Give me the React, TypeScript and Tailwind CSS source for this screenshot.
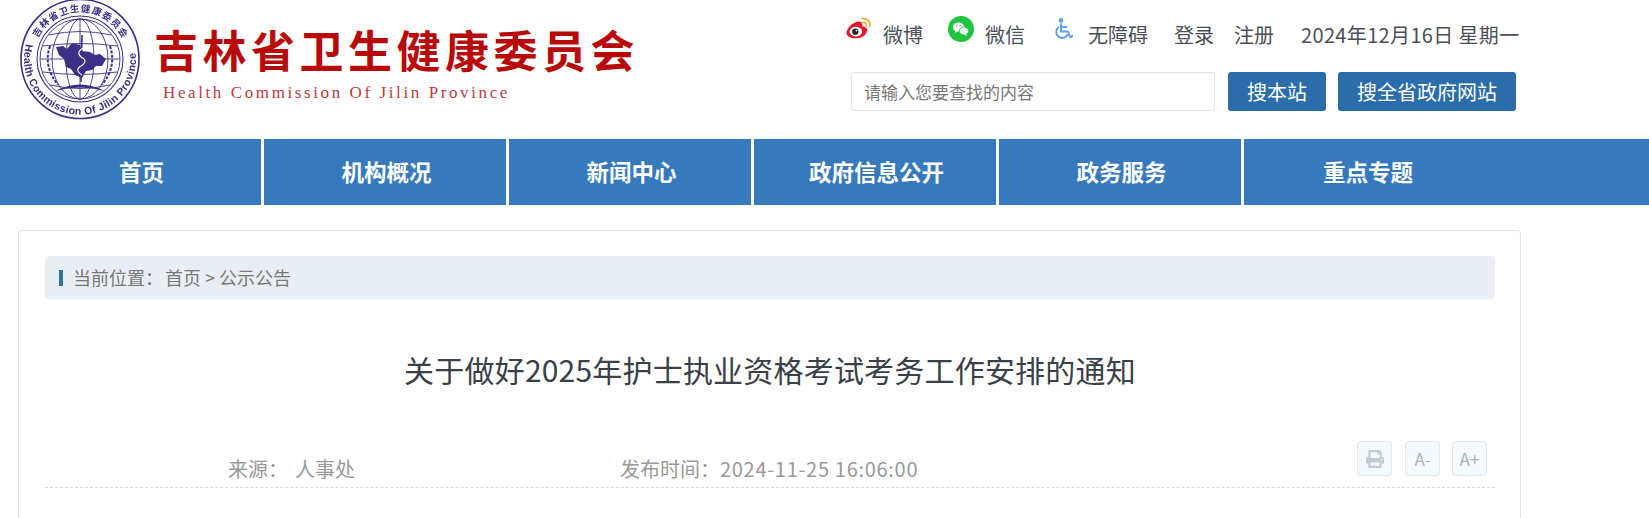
import { FaPrint } from "react-icons/fa";

const navItems = ["首页", "机构概况", "新闻中心", "政府信息公开", "政务服务", "重点专题"];

const sideBtn =
  "flex h-[35px] w-[35px] items-center justify-center rounded-[4px] border border-[#dfe7ec] bg-[#f4fafe] text-[17px] text-[#a9b2b8]";
const searchBtn =
  "h-[39px] rounded-[3px] bg-[#2b6dab] text-[20px] text-white";

function Seal() {
  const ink = "#3b3087";
  return (
    <svg width="122" height="120" viewBox="0 0 122 120" className="blur-[0.3px]">
      <defs>
        <path id="sealTop" d="M 19 38 A 47 47 0 0 1 104 40" />
        <path id="sealBottom" d="M 7 44 A 56 56 0 1 0 116.5 51" />
      </defs>
      <ellipse cx="61" cy="59" rx="59" ry="59.5" fill="none" stroke={ink} strokeWidth="1.6" />
      <circle cx="61" cy="59" r="43" fill="none" stroke={ink} strokeWidth="1.1" />
      <circle cx="61" cy="59" r="40" fill="none" stroke={ink} strokeWidth="0.9" />
      <text fill={ink} fontSize="9.5" fontWeight="700" fontFamily="'Noto Sans CJK SC', sans-serif">
        <textPath href="#sealTop" textLength="104">吉林省卫生健康委员会</textPath>
      </text>
      <text fill={ink} fontSize="10.5" fontWeight="700" fontFamily="'Liberation Sans', sans-serif">
        <textPath href="#sealBottom" textLength="196">Health Commission Of Jilin Province</textPath>
      </text>
      <g fill="none" stroke={ink} strokeWidth="0.9">
        <ellipse cx="61" cy="59" rx="14" ry="40" />
        <ellipse cx="61" cy="59" rx="28" ry="40" />
        <line x1="61" y1="19" x2="61" y2="99" />
        <path d="M 30 35 Q 61 28 92 35" />
        <path d="M 21 59 L 101 59" />
        <path d="M 24 46 Q 61 41 98 46" />
        <path d="M 24 72 Q 61 77 98 72" />
        <path d="M 31 85 Q 61 92 91 85" />
      </g>
      <path
        d="M 37 47 L 44 46 L 48 49 L 53 43 L 61 45 L 63 51 L 71 52 L 76 55 L 81 54 L 87 59 L 83 66 L 77 66 L 73 70 L 67 71 L 63 78 L 56 75 L 52 69 L 47 67 L 45 59 L 40 55 Z"
        fill={ink}
      />
      <line x1="63" y1="35" x2="62" y2="82" stroke={ink} strokeWidth="1.6" />
      <path d="M 66 47 Q 56 52 62 57 Q 70 61 62 66 Q 55 70 63 75" fill="none" stroke="#ffffff" strokeWidth="1.1" />
      <g fill="none" stroke={ink} strokeWidth="2" strokeDasharray="3 1.5">
        <path d="M 31 46 Q 24 66 39 85" />
        <path d="M 91 46 Q 98 66 83 85" />
      </g>
      <path d="M 36 91 Q 61 78 86 91 Q 61 84 36 91 Z" fill={ink} />
    </svg>
  );
}

function WeiboIcon() {
  return (
    <svg width="27" height="23" viewBox="0 0 25 22" className="mb-[14px] -ml-[1px]">
      <path d="M 10 5 C 15 3 17 6 16 9 C 20 9 22 11 20 15 C 18 20 11 21 6 20 C 1 19 0 15 2 12 C 4 8 7 6 10 5 Z" fill="#e6162d" />
      <ellipse cx="10" cy="14" rx="6" ry="4.6" fill="#ffffff" />
      <circle cx="9.5" cy="14" r="3" fill="#222222" />
      <circle cx="10.5" cy="13" r="0.9" fill="#ffffff" />
      <path d="M 16 1.5 C 21 1 24 4.5 23.4 9" fill="none" stroke="#f5a623" strokeWidth="1.6" strokeLinecap="round" />
      <path d="M 16.5 5 C 18.8 4.8 20.4 6.4 20 8.6" fill="none" stroke="#f5a623" strokeWidth="1.5" strokeLinecap="round" />
    </svg>
  );
}

function WechatIcon() {
  return (
    <svg width="26" height="26" viewBox="0 0 26 26" className="mb-[12px]">
      <circle cx="13" cy="13" r="13" fill="#1fc43f" />
      <ellipse cx="10.5" cy="11" rx="5.6" ry="4.6" fill="#ffffff" />
      <path d="M 7.5 14 L 6.6 17 L 10 15 Z" fill="#ffffff" />
      <ellipse cx="16" cy="15" rx="4.8" ry="3.9" fill="#e8f8ec" stroke="#1fc43f" strokeWidth="0.8" />
      <path d="M 18 18 L 19.4 20 L 15.6 18.6 Z" fill="#e8f8ec" />
      <circle cx="8.6" cy="9.6" r="0.8" fill="#1fc43f" />
      <circle cx="12.2" cy="9.6" r="0.8" fill="#1fc43f" />
    </svg>
  );
}

function WheelchairIcon() {
  return (
    <svg width="20" height="23" viewBox="0 0 20 23" className="mb-[12px]">
      <circle cx="8" cy="2.4" r="2.3" fill="#5f9ff5" />
      <path d="M 8 6 L 8 13.5 L 15 13.5 L 17 19 L 19.5 18" fill="none" stroke="#5f9ff5" strokeWidth="2" strokeLinejoin="round" strokeLinecap="round" />
      <path d="M 8 9 L 13.5 9" fill="none" stroke="#5f9ff5" strokeWidth="1.8" strokeLinecap="round" />
      <path d="M 5.2 9.5 A 6 6 0 1 0 14.4 17" fill="none" stroke="#5f9ff5" strokeWidth="1.9" strokeLinecap="round" />
    </svg>
  );
}

export default function App() {
  return (
    <div className="h-[518px] overflow-hidden bg-white font-['Noto_Sans_CJK_SC',sans-serif]">
      <header className="ml-[18px] flex h-[139px] w-[1503px]">
        <div className="flex items-start pl-[1px]">
          <Seal />
          <div className="ml-[13px] pt-[23px]">
            <div className="whitespace-nowrap text-[44px] font-bold leading-[52px] tracking-[4.5px] text-[#b90a0a]">
              吉林省卫生健康委员会
            </div>
            <div className="ml-[9px] mt-[7px] whitespace-nowrap font-['Liberation_Serif',serif] text-[17px] leading-[22px] tracking-[2.6px] text-[#bd3a3f]">
              Health Commission Of Jilin Province
            </div>
          </div>
        </div>
        <div className="ml-auto w-[675px]">
          <div className="mt-[20px] flex h-[30px] items-center whitespace-nowrap text-[20px] text-[#4a4f58]">
            <WeiboIcon />
            <span className="ml-[11px]">微博</span>
            <span className="ml-[25px] flex items-center">
              <WechatIcon />
            </span>
            <span className="ml-[11px]">微信</span>
            <span className="ml-[28px] flex items-center">
              <WheelchairIcon />
            </span>
            <span className="ml-[15px]">无障碍</span>
            <span className="ml-[26px]">登录</span>
            <span className="ml-[20px]">注册</span>
            <span className="ml-[27px] tracking-[0.35px]">2024年12月16日 星期一</span>
          </div>
          <div className="mt-[22px] flex pl-[5px]">
            <input
              placeholder="请输入您要查找的内容"
              className="h-[39px] w-[364px] rounded-[3px] border border-[#e8e1e1] px-[12px] text-[17px] outline-none placeholder:text-[#777]"
            />
            <button className={`${searchBtn} ml-[13px] w-[98px]`}>搜本站</button>
            <button className={`${searchBtn} ml-[12px] w-[178px]`}>搜全省政府网站</button>
          </div>
        </div>
      </header>

      <nav className="flex h-[66px] bg-[#3779bd] pl-[19px]">
        {navItems.map((item, i) => (
          <a
            key={item}
            className={`flex w-[245px] items-center justify-center border-white pl-[3px] text-[22.5px] font-bold text-white ${
              i < navItems.length - 1 ? "border-r-[3px]" : ""
            }`}
          >
            {item}
          </a>
        ))}
      </nav>

      <main className="ml-[18px] mt-[25px] h-[400px] w-[1503px] rounded-[4px] border border-[#e2e2e2] pl-[26px] pr-[25px] pt-[25px]">
        <div className="flex h-[43px] items-center rounded-[4px] bg-[#e9eef4] pl-[14px] text-[18px] text-[#777]">
          <i className="mr-[10px] h-[16px] w-[4px] bg-[#2f6fa8]" />
          <span className="mr-[2px]">当前位置：</span>
          <span>首页 &gt; 公示公告</span>
        </div>

        <h1 className="mt-[50px] text-center text-[30px] font-normal leading-[40px] tracking-[0.2px] text-[#3a4048]">
          关于做好2025年护士执业资格考试考务工作安排的通知
        </h1>

        <div className="mt-[52px] flex h-[47px] items-start border-b border-dashed border-[#d8d8d8] text-[20px] text-[#999]">
          <div className="ml-[183px] mt-[13px] w-[392px] whitespace-nowrap leading-[30px]">
            来源：<span className="ml-[7px]">人事处</span>
          </div>
          <div className="mt-[13px] whitespace-nowrap leading-[30px]">
            发布时间：<span className="tracking-[0.7px]">2024-11-25 16:06:00</span>
          </div>
          <div className="ml-auto mr-[8px] flex">
            <button className={sideBtn}>
              <FaPrint size={18} color="#c2cbd1" />
            </button>
            <button className={`${sideBtn} ml-[13px]`}>A-</button>
            <button className={`${sideBtn} ml-[12px]`}>A+</button>
          </div>
        </div>
      </main>
    </div>
  );
}
